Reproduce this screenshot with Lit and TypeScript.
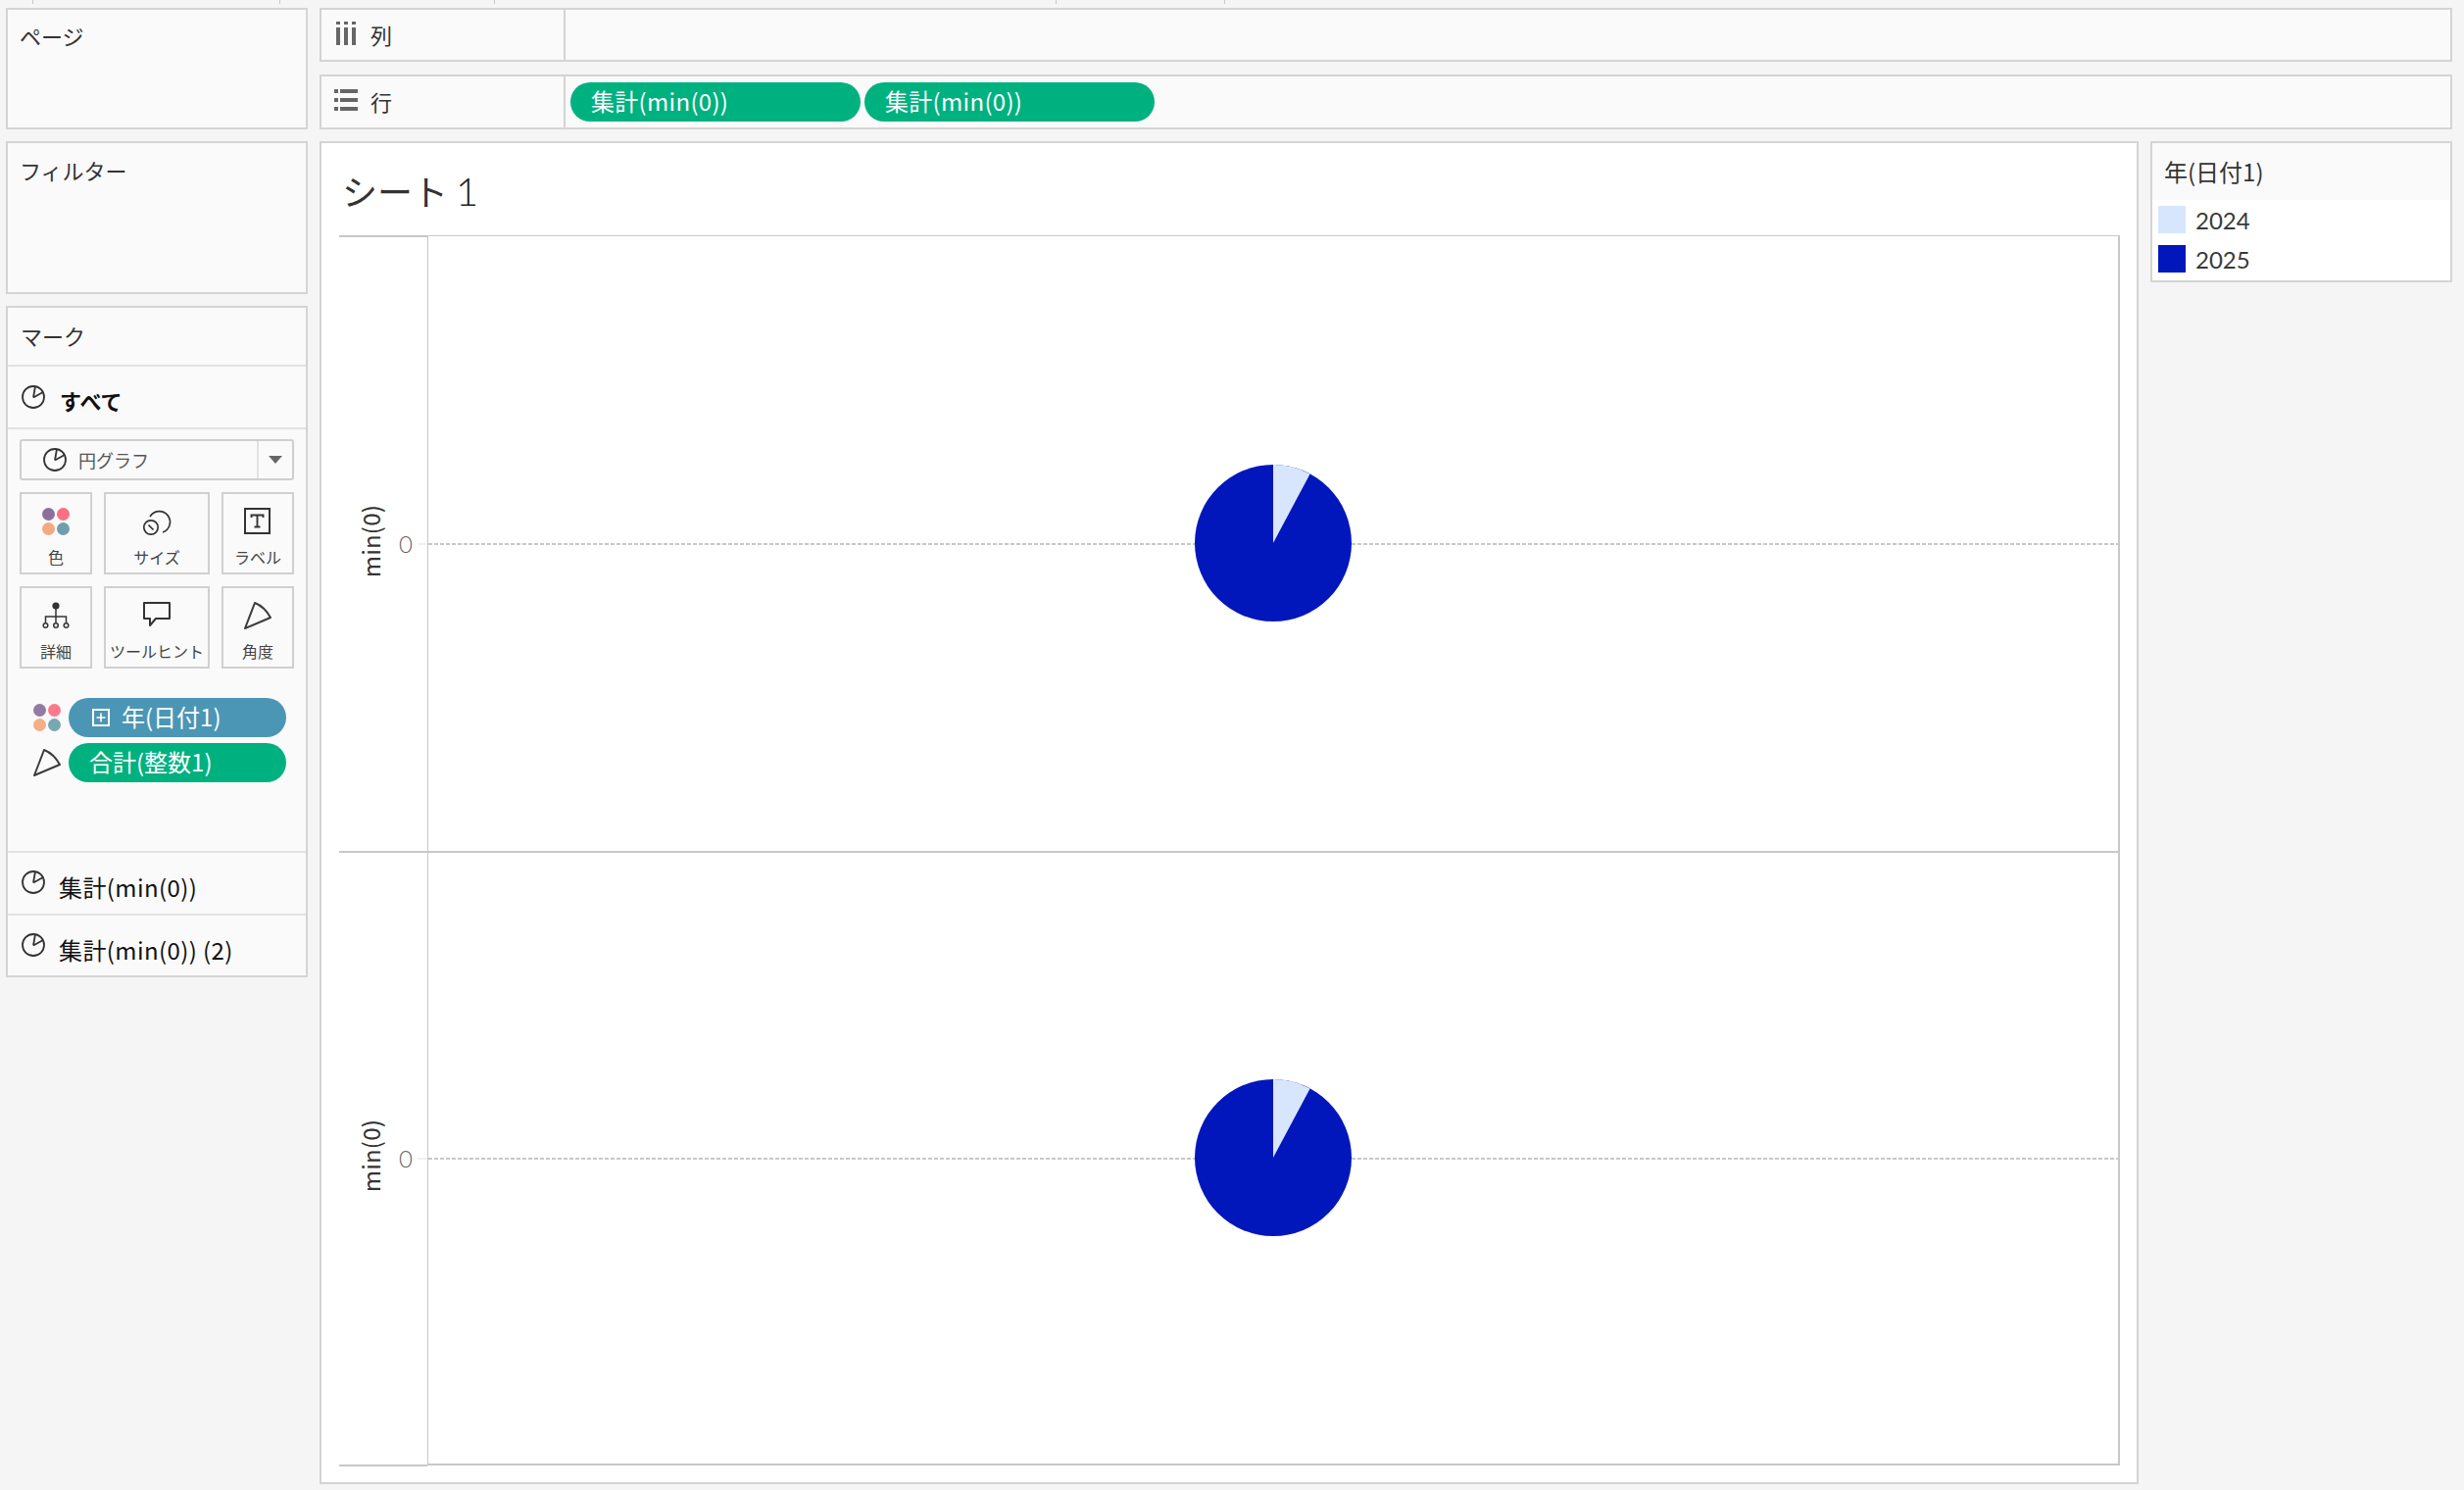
import { LitElement, html, css, svg } from "lit";
import { customElement } from "lit/decorators.js";

const pieIcon = html`<svg class="pie-ico" viewBox="0 0 24 24" fill="none" stroke="#333" stroke-width="1.8"><circle cx="12" cy="12" r="11"/><path d="M12 12.5 L14 1 M12 12.5 L22 7"/></svg>`;
const dots = (cls: string) => html`<svg class=${cls} viewBox="0 0 28 28"><circle cx="6.5" cy="6.5" r="6.5" fill="#8a719b"/><circle cx="21.5" cy="6.5" r="6.5" fill="#fa7082"/><circle cx="6.5" cy="21.5" r="6.5" fill="#f4a97e"/><circle cx="21.5" cy="21.5" r="6.5" fill="#6f9fae"/></svg>`;
const angle = html`<svg class="ico28" viewBox="0 0 28 28" fill="none" stroke="#3c3c3c" stroke-width="2" stroke-linejoin="round"><path d="M1 27 L11 1 Q21 5 27 16 Z"/></svg>`;

const buttons = [
  { label: "色", icon: dots("ico28") },
  { label: "サイズ", icon: html`<svg class="ico28" viewBox="0 0 28 28" fill="none" stroke="#333" stroke-width="1.7"><path d="M7 9 A11 11 0 1 1 20 25"/><circle cx="8" cy="20" r="7.2"/><path d="M5.5 17.5 L10.5 22.5"/></svg>` },
  { label: "ラベル", icon: html`<svg class="ico28" viewBox="0 0 28 28" fill="none" stroke="#333"><rect x="1" y="1" width="25" height="25" stroke-width="2"/><path d="M7.5 10 V7.5 H19.5 V10 M13.5 7.5 V19.5 M10.5 19.5 H16.5" stroke-width="1.9"/></svg>` },
  { label: "詳細", icon: html`<svg class="ico28" viewBox="0 0 28 28" fill="none" stroke="#333" stroke-width="1.5"><circle cx="14" cy="4" r="3.6" fill="#333" stroke="none"/><path d="M14 7 V21 M3.5 21 V15 H24.5 V21"/><circle cx="3.5" cy="24" r="2.3"/><circle cx="14" cy="24" r="2.3"/><circle cx="24.5" cy="24" r="2.3"/></svg>` },
  { label: "ツールヒント", icon: html`<svg class="ico28" viewBox="0 0 28 28" fill="none" stroke="#333" stroke-width="2" stroke-linejoin="round"><path d="M1 1 H27 V17 H13 L7 24 V17 H1 Z"/></svg>` },
  { label: "角度", icon: angle },
];

const ticks = [33, 285, 504, 1077, 1249];

@customElement("x-pane")
class XPane extends LitElement {
  static properties = { last: { type: Boolean, reflect: true } };
  last = false;
  static styles = css`
    :host { display: grid; grid-template-columns: 90px 1fr; min-height: 0; }
    .axis { display: flex; align-items: center; border-top: 2px solid #c8c8c8; box-sizing: border-box; }
    :host([last]) .axis { border-bottom: 2px solid #c8c8c8; }
    .title { writing-mode: vertical-rl; transform: rotate(180deg); font-size: 24px; line-height: 30px; color: #333; margin-left: 17px; margin-bottom: 5px; letter-spacing: 0.2px; }
    .zero { font-family: Lato, sans-serif; font-size: 24px; line-height: 30px; color: #666; margin-left: 14px; font-weight: 300; }
    .tick { margin-left: auto; width: 10px; height: 2px; background: #f0f0f0; }
    .plot { position: relative; display: flex; align-items: center; justify-content: center; border-top: 2px solid #c8c8c8; border-left: 1px solid #c8c8c8; border-right: 2px solid #c8c8c8; box-sizing: border-box; }
    :host([first]) .plot { border-top-width: 1px; }
    :host([last]) .plot { border-bottom: 2px solid #c8c8c8; margin-bottom: 1px; }
    .dash { position: absolute; left: 0; right: 0; top: 50%; height: 2px; margin-top: -1px; background: repeating-linear-gradient(90deg, #c8c8c8 0 4px, transparent 4px 6px); }
    svg { position: relative; width: 160px; height: 160px; display: block; margin-top: -2px; }
  `;
  render() {
    return html`
      <div class="axis"><span class="title">min(0)</span><span class="zero">0</span><span class="tick"></span></div>
      <div class="plot"><div class="dash"></div>
        <svg viewBox="0 0 160 160">${svg`<circle cx="80" cy="80" r="80" fill="#0217bb"/><path d="M80 80 L80 0 A80 80 0 0 1 117.6 9.4 Z" fill="#d8e6fd"/>`}</svg>
      </div>`;
  }
}

@customElement("app-root")
export class AppRoot extends LitElement {
  static styles = css`
    :host { display: block; width: 2514px; height: 1520px; background: #f5f5f5; font-family: "Noto Sans CJK JP", "Noto Sans", sans-serif; color: #333; position: relative; overflow: hidden; }
    * { box-sizing: border-box; }
    .tickmark { position: absolute; top: 0; width: 1px; height: 4px; background: #c8c8c8; }
    .page { display: flex; gap: 12px; padding: 8px 12px 6px 6px; height: 100%; }
    .left { width: 308px; flex: none; display: flex; flex-direction: column; gap: 12px; }
    .right { flex: 1; min-width: 0; display: flex; flex-direction: column; }
    .card { border: 2px solid #d4d4d4; background: #fafafa; }
    .cardlabel { font-size: 22px; line-height: 32px; padding: 10px 0 0 12px; color: #333; }
    .c-filter .cardlabel { padding-top: 11px; }
    .c-page { height: 124px; }
    .c-filter { height: 156px; }
    .marks { height: 685px; display: flex; flex-direction: column; }
    .m-head { height: 60px; flex: none; border-bottom: 2px solid #e2e2e2; font-size: 22px; line-height: 30px; padding: 13px 0 0 13px; }
    .m-row { display: flex; flex: none; border-bottom: 2px solid #e2e2e2; padding-left: 14px; color: #111; font-size: 24px; }
    .m-row:last-child { border-bottom: none; }
    .pie-ico { width: 24px; height: 24px; flex: none; display: block; }
    .m-all { height: 64px; font-weight: 700; font-size: 22px; padding-top: 19px; }
    .m-all span { margin-left: 15px; line-height: 36px; margin-top: -3px; }
    .m-sum { height: 64px; padding-top: 18px; }
    .m-sum:last-child { height: 61px; }
    .m-sum span { margin-left: 14px; line-height: 36px; margin-top: -1px; letter-spacing: 0.4px; }
    .m-body { height: 432px; flex: none; padding: 10px 12px 0; border-bottom: 2px solid #e2e2e2; }
    .select { height: 42px; border: 2px solid #cfcfcf; border-radius: 3px; display: flex; align-items: center; font-size: 18px; color: #555; }
    .select .main { flex: 1; display: flex; align-items: center; gap: 12px; padding-left: 22px; height: 100%; border-right: 2px solid #e2e2e2; }
    .arrow { width: 34px; display: flex; justify-content: center; }
    .arrow i { width: 0; height: 0; border-left: 7px solid transparent; border-right: 7px solid transparent; border-top: 8px solid #666; }
    .btns { display: grid; grid-template-columns: 74px 108px 74px; gap: 12px; grid-auto-rows: 84px; margin-top: 12px; }
    .btn { border: 2px solid #d0d0d0; display: flex; flex-direction: column; align-items: center; font-size: 16px; line-height: 22px; color: #444; padding-top: 14px; white-space: nowrap; }
    .ico28 { width: 28px; height: 28px; display: block; flex: none; overflow: visible; }
    .btn span { margin-top: 11px; }
    .pills { margin-top: 30px; display: grid; grid-template-columns: 28px 222px; column-gap: 8px; row-gap: 6px; padding-left: 14px; align-items: center; margin-right: -14px; }
    .pill { height: 40px; border-radius: 20px; color: #fff; font-size: 24px; display: flex; align-items: center; line-height: 40px; white-space: nowrap; padding-bottom: 2px; }
    .pill.green { background: #00b180; padding-left: 21px; }
    .pill.blue { background: #4c96b5; padding-left: 24px; }
    .pill.blue svg { width: 18px; height: 18px; margin-right: 12px; margin-top: 2px; }
    .dim { opacity: 0.92; }
    .shelf { display: flex; align-items: stretch; }
    .shelf.col { height: 55px; }
    .shelf.row { height: 56px; margin-top: 13px; }
    .s-label { width: 249px; flex: none; border-right: 2px solid #d4d4d4; display: flex; align-items: center; font-size: 22px; padding-left: 13px; gap: 13px; }
    .s-label svg { width: 24px; height: 24px; flex: none; margin-top: -4px; }
    .s-label span { margin-top: -2px; }
    .s-body { flex: 1; display: flex; align-items: center; gap: 4px; padding-left: 5px; }
    .s-body .pill { width: 296px; letter-spacing: 0.3px; }
    .lower { flex: 1; min-height: 0; display: flex; gap: 12px; margin-top: 12px; }
    .sheet { flex: 1; min-width: 0; border: 2px solid #d4d4d4; background: #fff; display: flex; flex-direction: column; padding: 0 17px 16px 18px; }
    .s-title { height: 94px; flex: none; font-size: 36px; line-height: 50px; padding: 23px 0 0 3px; color: #333; white-space: pre; }
    .s-title em { font-family: Lato, sans-serif; font-style: normal; font-weight: 300; font-size: 40px; color: #222; }
    .chart { flex: 1; min-height: 0; display: grid; grid-template-rows: 1fr 1fr; }
    .legend { width: 308px; height: 144px; flex: none; border: 2px solid #d4d4d4; background: #fff; }
    .l-head { height: 58px; background: #fafafa; font-size: 24px; line-height: 58px; padding-left: 12px; }
    .l-item { display: flex; align-items: center; height: 28px; margin: 6px 0 12px 6px; font-family: Lato, sans-serif; font-size: 24px; gap: 10px; color: #3a3a3a; }
    .l-item i { width: 28px; height: 28px; display: block; }
  `;
  render() {
    return html`
      ${ticks.map((x) => html`<div class="tickmark" style="left:${x}px"></div>`)}
      <div class="page">
        <div class="left">
          <div class="card c-page"><div class="cardlabel">ページ</div></div>
          <div class="card c-filter"><div class="cardlabel">フィルター</div></div>
          <div class="card marks">
            <div class="m-head">マーク</div>
            <div class="m-row m-all">${pieIcon}<span>すべて</span></div>
            <div class="m-body">
              <div class="select"><div class="main">${pieIcon}<span>円グラフ</span></div><div class="arrow"><i></i></div></div>
              <div class="btns">${buttons.map((b) => html`<div class="btn">${b.icon}<span>${b.label}</span></div>`)}</div>
              <div class="pills">
                ${dots("ico28 dim")}
                <div class="pill blue"><svg viewBox="0 0 18 18" fill="none" stroke="#fff" stroke-width="2"><rect x="1" y="1" width="16" height="16"/><path d="M9 4.5 V13.5 M4.5 9 H13.5" stroke-width="1.6"/></svg>年(日付1)</div>
                ${angle}
                <div class="pill green">合計(整数1)</div>
              </div>
            </div>
            <div class="m-row m-sum">${pieIcon}<span>集計(min(0))</span></div>
            <div class="m-row m-sum">${pieIcon}<span>集計(min(0)) (2)</span></div>
          </div>
        </div>
        <div class="right">
          <div class="card shelf col">
            <div class="s-label"><svg viewBox="0 0 24 24" fill="#666"><rect x="2" y="0" width="4" height="3"/><rect x="2" y="6" width="4" height="18"/><rect x="10" y="0" width="4" height="3"/><rect x="10" y="6" width="4" height="18"/><rect x="18" y="0" width="4" height="3"/><rect x="18" y="6" width="4" height="18"/></svg><span>列</span></div>
            <div class="s-body"></div>
          </div>
          <div class="card shelf row">
            <div class="s-label"><svg viewBox="0 0 24 24" fill="#666"><rect x="0" y="1" width="4" height="4"/><rect x="6" y="1" width="18" height="4"/><rect x="0" y="10" width="4" height="4"/><rect x="6" y="10" width="18" height="4"/><rect x="0" y="19" width="4" height="4"/><rect x="6" y="19" width="18" height="4"/></svg><span>行</span></div>
            <div class="s-body"><div class="pill green">集計(min(0))</div><div class="pill green">集計(min(0))</div></div>
          </div>
          <div class="lower">
            <div class="sheet">
              <div class="s-title">シート <em>1</em></div>
              <div class="chart"><x-pane first></x-pane><x-pane last></x-pane></div>
            </div>
            <div class="legend">
              <div class="l-head">年(日付1)</div>
              <div class="l-item"><i style="background:#d8e6fd"></i>2024</div>
              <div class="l-item"><i style="background:#0217bb"></i>2025</div>
            </div>
          </div>
        </div>
      </div>`;
  }
}
void XPane;
